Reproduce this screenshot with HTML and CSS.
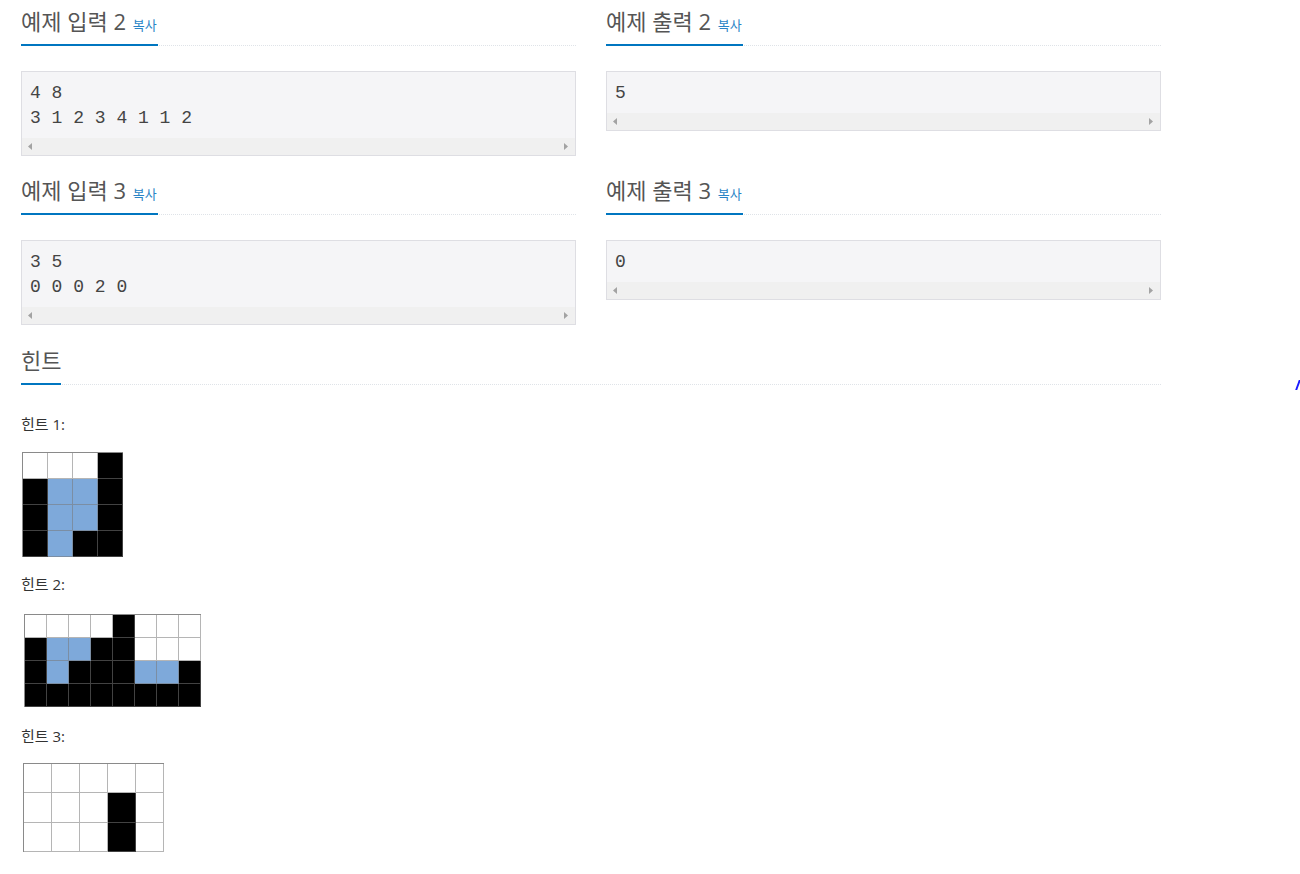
FILE: index.html
```html
<!DOCTYPE html>
<html lang="ko">
<head>
    <meta charset="UTF-8">
    <meta name="viewport" content="width=device-width, initial-scale=1.0">
    <title>문제 - 예제와 힌트</title>
    <link rel="stylesheet" href="styles.css">
</head>
<body>

<div class="container">
    <div class="samples">
        <section class="sample">
            <div class="headline">
                <h2>예제 입력 2 <span class="copy-button">복사</span></h2>
            </div>
            <div class="sampledata">
                <pre>4 8
3 1 2 3 4 1 1 2</pre>
                <div class="scrollbar"><span class="arrow-left"></span><span class="arrow-right"></span></div>
            </div>
        </section>

        <section class="sample">
            <div class="headline">
                <h2>예제 출력 2 <span class="copy-button">복사</span></h2>
            </div>
            <div class="sampledata">
                <pre>5</pre>
                <div class="scrollbar"><span class="arrow-left"></span><span class="arrow-right"></span></div>
            </div>
        </section>

        <section class="sample">
            <div class="headline">
                <h2>예제 입력 3 <span class="copy-button">복사</span></h2>
            </div>
            <div class="sampledata">
                <pre>3 5
0 0 0 2 0</pre>
                <div class="scrollbar"><span class="arrow-left"></span><span class="arrow-right"></span></div>
            </div>
        </section>

        <section class="sample">
            <div class="headline">
                <h2>예제 출력 3 <span class="copy-button">복사</span></h2>
            </div>
            <div class="sampledata">
                <pre>0</pre>
                <div class="scrollbar"><span class="arrow-left"></span><span class="arrow-right"></span></div>
            </div>
        </section>
    </div>

    <section class="hint">
        <div class="headline">
            <h2>힌트</h2>
        </div>

        <div class="hint-body">
            <p class="hint-label">힌트 1:</p>
            <!-- 4 x 4 -->
            <div class="board board-1">
                <i class="w"></i><i class="w"></i><i class="w"></i><i class="b"></i>
                <i class="b"></i><i class="l"></i><i class="l"></i><i class="b"></i>
                <i class="b"></i><i class="l"></i><i class="l"></i><i class="b"></i>
                <i class="b"></i><i class="l"></i><i class="b"></i><i class="b"></i>
            </div>

            <p class="hint-label">힌트 2:</p>
            <!-- 8 x 4 -->
            <div class="board board-2">
                <i class="w"></i><i class="w"></i><i class="w"></i><i class="w"></i><i class="b"></i><i class="w"></i><i class="w"></i><i class="w"></i>
                <i class="b"></i><i class="l"></i><i class="l"></i><i class="b"></i><i class="b"></i><i class="w"></i><i class="w"></i><i class="w"></i>
                <i class="b"></i><i class="l"></i><i class="b"></i><i class="b"></i><i class="b"></i><i class="l"></i><i class="l"></i><i class="b"></i>
                <i class="b"></i><i class="b"></i><i class="b"></i><i class="b"></i><i class="b"></i><i class="b"></i><i class="b"></i><i class="b"></i>
            </div>

            <p class="hint-label">힌트 3:</p>
            <!-- 5 x 3 -->
            <div class="board board-3">
                <i class="w"></i><i class="w"></i><i class="w"></i><i class="w"></i><i class="w"></i>
                <i class="w"></i><i class="w"></i><i class="w"></i><i class="b"></i><i class="w"></i>
                <i class="w"></i><i class="w"></i><i class="w"></i><i class="b"></i><i class="w"></i>
            </div>
        </div>
    </section>
</div>

<div class="edge-mark"></div>

</body>
</html>
```

FILE: styles.css
```css
body {
    margin: 0;
    font-family: 'Open Sans', 'Noto Sans CJK KR', sans-serif;
    font-size: 15px;
    color: #333;
    background-color: #fff;
}

.container {
    width: 1140px;
    margin-left: 21px;
}

.samples {
    display: grid;
    grid-template-columns: 555px 555px;
    column-gap: 30px;
}

.sample {
    padding-bottom: 13px;
}

/* 제목 + 밑줄 */
.headline {
    display: flex;
    margin: 6px 0 25px 0;
    border-bottom: 1px dotted #dfe3e8;
}

.headline h2 {
    margin: 0 0 -1px 0;
    padding-bottom: 8px;
    border-bottom: 2px solid #0076c0;
    font-size: 22px;
    line-height: 30px;
    font-weight: normal;
    color: #555;
}

.copy-button {
    padding: 0 1px 0 1px;
    font-size: 13px;
    line-height: 1;
    color: #2a84c6;
}

/* 예제 박스 */
.sampledata {
    border: 1px solid #dedee3;
    background-color: #f5f5f7;
}

.sampledata pre {
    margin: 0;
    padding: 9px 8px 7px;
    font-family: 'Liberation Mono', monospace;
    font-size: 18px;
    line-height: 25px;
    color: #444;
}

.scrollbar {
    height: 17px;
    background-color: #f0f0f0;
    display: flex;
    justify-content: space-between;
    align-items: center;
    padding: 0 7px 0 6px;
}

.arrow-left,
.arrow-right {
    width: 4px;
    height: 7px;
    background-color: #a3a3a3;
}

.arrow-left {
    clip-path: polygon(100% 0, 100% 100%, 0 50%);
}

.arrow-right {
    clip-path: polygon(0 0, 0 100%, 100% 50%);
}

/* 힌트 */
.hint .headline {
    margin-top: 7px;
}

.hint-body {
    padding-top: 4px;
}

.hint-label {
    margin: 0;
    line-height: 20px;
    font-size: 15px;
}

.board {
    display: grid;
    width: max-content;
    border-top: 1px solid #8a8a8a;
    border-left: 1px solid #8a8a8a;
}

.board i {
    display: block;
    border-right: 1px solid rgba(120, 120, 120, 0.55);
    border-bottom: 1px solid rgba(120, 120, 120, 0.55);
}

.board .w { background-color: #fff; }
.board .b { background-color: #000; }
.board .l { background-color: #7ea9da; }

.board-1 {
    grid-template-columns: repeat(4, 25px);
    grid-auto-rows: 26px;
    margin: 18px 0 17px 1px;
}

.board-2 {
    grid-template-columns: repeat(8, 22px);
    grid-auto-rows: 23px;
    margin: 20px 0 19px 3px;
}

.board-3 {
    grid-template-columns: repeat(5, 28px);
    grid-auto-rows: 29.3px;
    margin: 17px 0 20px 2px;
}

/* 오른쪽 끝에 걸친 파란 표시 */
.edge-mark {
    position: absolute;
    left: 1297px;
    top: 380px;
    width: 2px;
    height: 10px;
    background-color: #1a1aff;
    transform: skewX(-20deg);
}
```
